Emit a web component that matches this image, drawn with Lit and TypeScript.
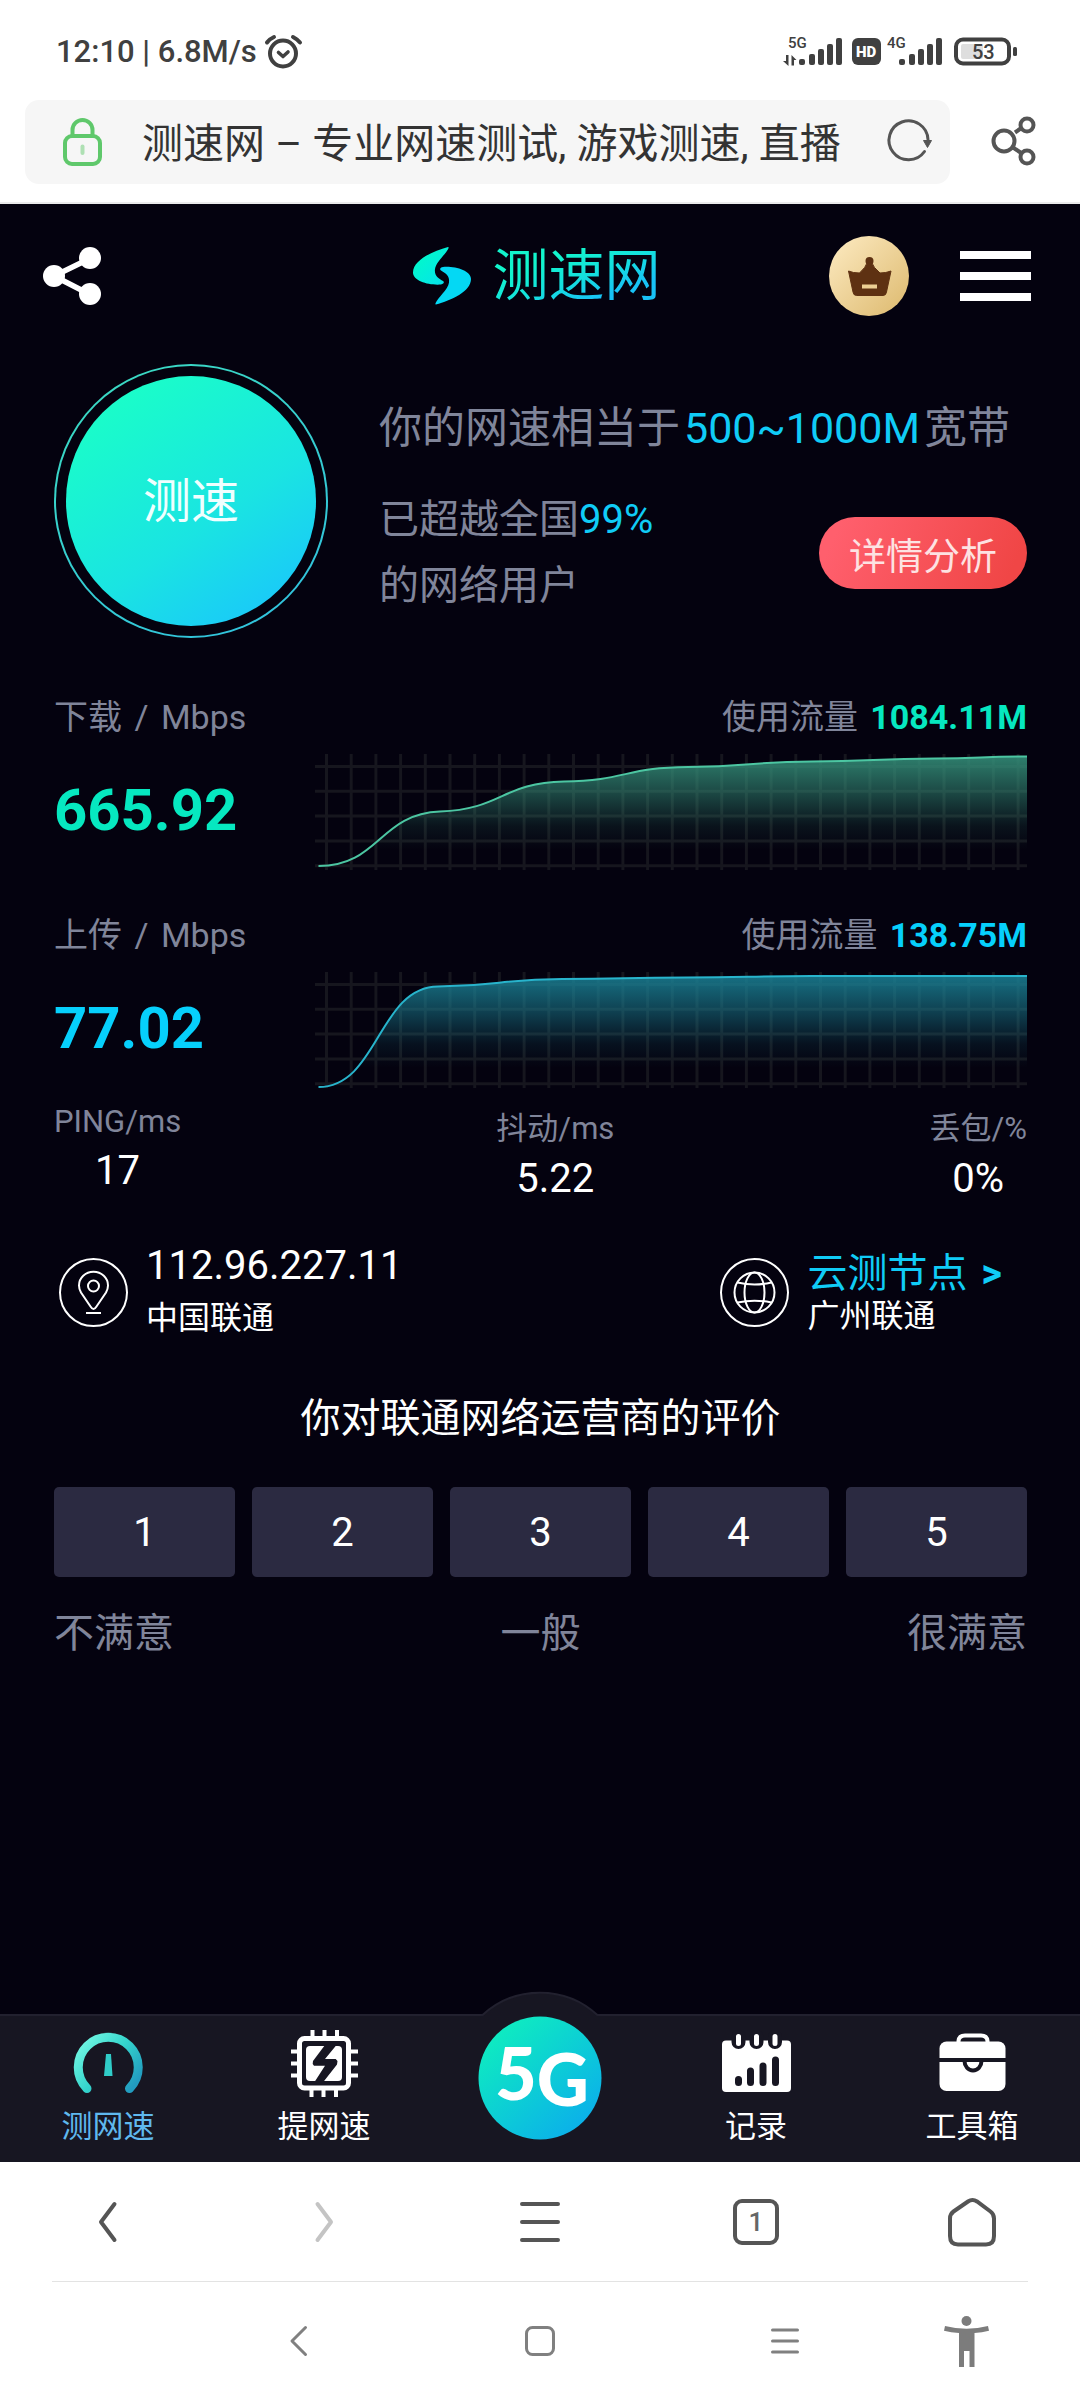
import { LitElement, html, css, svg } from "lit";
import { customElement, property, state } from "lit/decorators.js";

const fontStack = css`Roboto, "Noto Sans CJK SC", sans-serif`;

const resetButton = css`
  button {
    margin: 0;
    padding: 0;
    border: 0;
    background: none;
    font: inherit;
    color: inherit;
    cursor: pointer;
  }
  svg {
    display: block;
    flex: none;
    overflow: visible;
  }
`;

/* ---------- phone status bar ---------- */

@customElement("status-bar")
export class StatusBar extends LitElement {
  static styles = [
    resetButton,
    css`
      :host {
        display: flex;
        align-items: center;
        justify-content: space-between;
        padding: 28px 61px 24px 56px;
        line-height: 48px;
        font-size: 31px;
        font-weight: 500;
        color: #404040;
      }
      .left {
        display: flex;
        align-items: center;
        gap: 8px;
      }
      .net {
        font-size: 15px;
        font-weight: 500;
      }
      .hd {
        font-size: 15px;
        font-weight: 900;
      }
      .level {
        font-size: 20px;
        font-weight: 500;
      }
    `,
  ];

  private bars(x: number) {
    return [
      [0, 23, 6],
      [10, 18, 11],
      [19, 13, 16],
      [28, 8, 21],
      [37, 2, 27],
    ].map(
      ([dx, y, h]) => svg`<rect x=${x + dx} y=${y} width="6" height=${h} rx="2" fill="#404040"/>`,
    );
  }

  render() {
    return html`
      <div class="left">
        <span>12:10 | 6.8M/s</span>
        <svg width="37" height="34" viewBox="0 0 37 34" fill="none" stroke="#404040" stroke-linecap="round" aria-hidden="true">
          <circle cx="18" cy="18.5" r="13" stroke-width="4" />
          <path d="M13.5 17.5l4.5 4 5-4.5" stroke-width="3.6" stroke-linejoin="round" />
          <path d="M2 7.5Q4.5 4 9 2M35 7.5Q32 4 28 2" stroke-width="4" />
        </svg>
      </div>
      <svg width="236" height="32" viewBox="0 0 236 32" fill="#404040" role="img" aria-label="信号与电量">
        <text class="net" x="5" y="12">5G</text>
        <path d="M0 25h3v-6h2.5v11zM8.5 19l5 5h-2.5v-1.5v7h-2.5z" />
        ${this.bars(16)}
        <rect x="69" y="2" width="29" height="27" rx="6" />
        <text class="hd" x="73" y="21" fill="#fff">HD</text>
        <text class="net" x="104" y="12">4G</text>
        ${this.bars(116)}
        <rect x="178" y="8" width="22" height="15" rx="2" fill="#dedede" />
        <rect x="173" y="3.5" width="53" height="24" rx="7" fill="none" stroke="#404040" stroke-width="4" />
        <rect x="230" y="11" width="4" height="9" rx="1.5" />
        <text class="level" x="189" y="23">53</text>
      </svg>
    `;
  }
}

/* ---------- browser address bar ---------- */

@customElement("address-bar")
export class AddressBar extends LitElement {
  static styles = [
    resetButton,
    css`
      :host {
        display: flex;
        align-items: center;
        gap: 42px;
        padding: 0 44px 18px 25px;
        border-bottom: 2px solid #ebebeb;
      }
      .field {
        display: flex;
        align-items: center;
        flex: 1;
        min-width: 0;
        height: 84px;
        padding: 0 17px 0 38px;
        border-radius: 14px;
        background: #f6f6f6;
      }
      .title {
        flex: 1;
        min-width: 0;
        margin: 0 12px 0 39px;
        padding: 4px 0 0;
        border: 0;
        outline: 0;
        background: none;
        font: 400 41px/60px ${fontStack};
        color: #333;
      }
    `,
  ];

  render() {
    return html`
      <div class="field">
        <svg width="40" height="48" viewBox="0 0 40 48" fill="none" stroke="#5fc86b" stroke-width="4" aria-hidden="true">
          <rect x="2" y="18" width="35" height="28" rx="7" />
          <path d="M9.5 18v-6a10 10 0 0 1 20 0v6" />
          <path d="M19.5 28.5v6.5" stroke="#aee0b3" stroke-linecap="round" />
        </svg>
        <input class="title" type="text" aria-label="网址" .value=${"测速网 – 专业网速测试, 游戏测速, 直播"} />
        <button aria-label="刷新">
          <svg width="46" height="44" viewBox="0 0 46 44" fill="none" stroke="#555" stroke-width="3">
            <path d="M37.5 31.5A19.5 19.5 0 1 1 41 19.5" stroke-linecap="round" />
            <path d="M36.5 20.5h8l-4 7z" fill="#555" stroke-width="1" />
          </svg>
        </button>
      </div>
      <button aria-label="分享">
        <svg width="44" height="50" viewBox="0 0 44 50" fill="none" stroke="#555" stroke-width="4">
          <circle cx="12" cy="24" r="10.5" />
          <circle cx="35" cy="8" r="6.5" />
          <circle cx="35" cy="40" r="6.5" />
          <path d="M23 15.5l7-5M21 30.5l9 6" />
        </svg>
      </button>
    `;
  }
}

/* ---------- site header ---------- */

@customElement("site-header")
export class SiteHeader extends LitElement {
  static styles = [
    resetButton,
    css`
      :host {
        display: grid;
        grid-template-columns: 1fr auto 1fr;
        align-items: center;
        padding: 32px 49px 48px 42px;
      }
      .brand {
        display: flex;
        align-items: center;
        gap: 22px;
        text-decoration: none;
      }
      .word {
        font-size: 56px;
        line-height: 80px;
        font-weight: 400;
        color: transparent;
        background: linear-gradient(160deg, #12f5cc 30%, #14e2dc 50%, #18c2f6 72%);
        background-clip: text;
        -webkit-background-clip: text;
      }
      .tools {
        display: flex;
        align-items: center;
        justify-content: flex-end;
        gap: 51px;
      }
    `,
  ];

  render() {
    const half =
      "M35 0C20 4 0 13 0 25.5C0 34 16 38.5 28 37.5C31 37 31.5 35 30 34C26 31.5 21 29 22 22C23 15 33 7 35.5 1.2Q36 0 35 0Z";
    return html`
      <button aria-label="分享">
        <svg width="60" height="60" viewBox="0 0 60 60" fill="#fff" stroke="#fff">
          <path d="M49 12L12 30L49 49" fill="none" stroke-width="5.5" />
          <circle cx="12" cy="30" r="11" stroke="none" />
          <circle cx="48" cy="12" r="11" stroke="none" />
          <circle cx="48" cy="48" r="11" stroke="none" />
        </svg>
      </button>
      <a class="brand" href="#">
        <svg width="58" height="58" viewBox="0 0 58 58" aria-hidden="true">
          <defs>
            <linearGradient id="mark" gradientUnits="userSpaceOnUse" x1="8" y1="8" x2="48" y2="50">
              <stop offset="0" stop-color="#02f8cc" />
              <stop offset="0.5" stop-color="#04e8e4" />
              <stop offset="1" stop-color="#04c8fc" />
            </linearGradient>
          </defs>
          <path fill="url(#mark)" d=${half} />
          <g transform="rotate(180 29 28.7)">
            <path fill="#04d8f4" d=${half} />
          </g>
        </svg>
        <span class="word">测速网</span>
      </a>
      <div class="tools">
        <button aria-label="会员">
          <svg width="80" height="80" viewBox="0 0 80 80">
            <defs>
              <linearGradient id="gold" x1="0" y1="0" x2="1" y2="1">
                <stop offset="0.1" stop-color="#fae6ba" />
                <stop offset="0.9" stop-color="#e0be76" />
              </linearGradient>
            </defs>
            <circle cx="40" cy="40" r="40" fill="url(#gold)" />
            <circle cx="40.5" cy="25" r="4" fill="#5e3112" />
            <path
              fill="#5e3112"
              stroke="#5e3112"
              stroke-linejoin="round"
              d="M38 27h5Q44 31 51 37Q57 37 62 35L57.5 56Q57 59.500 54 59.5H27.5Q24.5 59.500 24 56L19.5 35Q24 37 30.5 37Q37 31 38 27z"
            />
            <rect x="33" y="48.5" width="15" height="4" fill="#eccf93" />
          </svg>
        </button>
        <button aria-label="菜单">
          <svg width="71" height="52" viewBox="0 0 71 52" fill="#fff">
            <path d="M0 1h71v8H0zM0 22h71v8H0zM0 43h71v8H0z" />
          </svg>
        </button>
      </div>
    `;
  }
}

/* ---------- speed panel: label, value and curve ---------- */

@customElement("speed-panel")
export class SpeedPanel extends LitElement {
  @property() label = "";
  @property() value = "";
  @property() traffic = "";
  @property() accent = "";
  @property() stroke = "";
  @property() fill = "";
  @property({ attribute: false }) points: number[][] = [];

  static styles = css`
    :host {
      display: flex;
      flex-direction: column;
      gap: 12px;
    }
    .head {
      display: flex;
      justify-content: space-between;
      font-size: 34px;
      line-height: 50px;
      color: #80859a;
    }
    .slash {
      margin: 0 4px;
    }
    .head b {
      margin-left: 4px;
    }
    .body {
      display: grid;
      grid-template-columns: 261px 1fr;
      align-items: center;
    }
    .value {
      padding-bottom: 4px;
      font-size: 58px;
      line-height: 68px;
      font-weight: 700;
    }
    .chart {
      display: block;
      width: 100%;
      height: 116px;
    }
    .green {
      color: #06e8c0;
    }
    .blue {
      color: #06d0fc;
    }
  `;

  private curve() {
    const p = this.points;
    let d = `M${p[0][0]} ${p[0][1]}`;
    for (let i = 1; i < p.length; i++) {
      const [x0, y0] = p[i - 1];
      const [x1, y1] = p[i];
      const slope = (k: number) => {
        if (k <= 0 || k >= p.length - 1) return 0;
        const a = (p[k][1] - p[k - 1][1]) / (p[k][0] - p[k - 1][0]);
        const b = (p[k + 1][1] - p[k][1]) / (p[k + 1][0] - p[k][0]);
        return a * b > 0 ? Math.max(a, b) * 0.15 : 0;
      };
      const h = (x1 - x0) / 2;
      d += `C${x0 + h} ${y0 + slope(i - 1) * h} ${x1 - h} ${y1 - slope(i) * h} ${x1} ${y1}`;
    }
    return d;
  }

  render() {
    const line = this.curve();
    const cols = Array.from({ length: 29 }, (_, i) => 11.5 + i * 24.7);
    const rows = Array.from({ length: 5 }, (_, i) => 12.5 + i * 24.8);
    return html`
      <div class="head">
        <span>${this.label} <span class="slash">/</span> Mbps</span>
        <span>使用流量 <b class=${this.accent}>${this.traffic}</b></span>
      </div>
      <div class="body">
        <span class="value ${this.accent}">${this.value}</span>
        <svg class="chart" viewBox="0 0 712 116" preserveAspectRatio="none" role="img" aria-label="${this.label}速度曲线">
          <defs>
            <linearGradient id="area" gradientUnits="userSpaceOnUse" x1="0" y1="0" x2="0" y2="96">
              <stop offset="0" stop-color=${this.fill} stop-opacity="0.9" />
              <stop offset="0.4" stop-color=${this.fill} stop-opacity="0.5" />
              <stop offset="0.75" stop-color=${this.fill} stop-opacity="0.12" />
              <stop offset="1" stop-color=${this.fill} stop-opacity="0" />
            </linearGradient>
          </defs>
          <g stroke="#16161e" stroke-width="3">
            ${cols.map((x) => svg`<path d="M${x} 0V116"/>`)}
            ${rows.map((y) => svg`<path d="M0 ${y}H712"/>`)}
          </g>
          <path d="${line}V116H3z" fill="url(#area)" />
          <path d=${line} fill="none" stroke=${this.stroke} stroke-width="2" />
        </svg>
      </div>
    `;
  }
}

/* ---------- bottom navigation of the site ---------- */

@customElement("site-tabs")
export class SiteTabs extends LitElement {
  static styles = [
    resetButton,
    css`
      :host {
        position: relative;
        display: grid;
        grid-template-columns: repeat(5, 1fr);
        justify-items: center;
        border-top: 2px solid #22212f;
        background: #171622;
        color: #fff;
      }
      .bump {
        position: absolute;
        left: 50%;
        top: -24px;
        margin-left: -60px;
      }
      .tab {
        display: flex;
        flex-direction: column;
        align-items: center;
        gap: 9px;
        padding: 12px 0 15px;
        font-size: 31px;
        line-height: 40px;
        color: inherit;
        text-decoration: none;
      }
      .active {
        color: #5fb8ee;
      }
      .five {
        position: relative;
        align-self: start;
      }
      .mark {
        font: 900 72px Lato, sans-serif;
      }
    `,
  ];

  render() {
    return html`
      <svg class="bump" width="120" height="26" viewBox="0 0 120 26" aria-hidden="true">
        <path d="M0 26L2 24A85 85 0 0 1 118 24L120 26z" fill="#171622" />
        <path d="M2 23.5A85 85 0 0 1 118 23.5" fill="none" stroke="#22212f" stroke-width="2" />
      </svg>
      <a class="tab active" href="#">
        <svg width="70" height="70" viewBox="0 0 70 70" aria-hidden="true">
          <defs>
            <linearGradient id="gauge" gradientUnits="userSpaceOnUse" x1="10" y1="12" x2="62" y2="56">
              <stop offset="0" stop-color="#70f6e2" />
              <stop offset="0.5" stop-color="#34d4cc" />
              <stop offset="1" stop-color="#229cc0" />
            </linearGradient>
          </defs>
          <path d="M14 60.5A30 30 0 1 1 56.5 60.5" fill="none" stroke="url(#gauge)" stroke-width="9" stroke-linecap="round" />
          <path d="M33 26h5l1.5 22h-8.5z" fill="#30ccc8" />
        </svg>
        测网速
      </a>
      <a class="tab" href="#">
        <svg width="70" height="70" viewBox="0 0 70 70" aria-hidden="true">
          <rect x="10.5" y="10.5" width="49" height="49.5" rx="5" fill="none" stroke="#fff" stroke-width="5" />
          <path
            d="M23.5 2v8M35.5 2v8M48 2v8M22.5 61v8M34.5 61v8M47 61v8M2 23.5h8M2 35.5h8M2 47.5h8M60 23.5h9M60 35.5h9M60 47.5h9"
            stroke="#fff"
            stroke-width="4"
          />
          <rect x="17" y="18" width="36" height="35" rx="4" fill="#fff" />
          <path fill="#171622" d="M36 17L47.5 17L36 31L46.7 31L48.5 33L48 36.5L34.3 54L25.5 54L36 37.7L25 37.7L23.7 36L24 33z" />
        </svg>
        提网速
      </a>
      <button class="five" aria-label="5G">
        <svg width="124" height="124" viewBox="0 0 124 124">
          <defs>
            <linearGradient id="disc" x1="0.15" y1="0.1" x2="0.85" y2="0.9">
              <stop offset="0" stop-color="#0eecc0" />
              <stop offset="1" stop-color="#0bb0ea" />
            </linearGradient>
          </defs>
          <circle cx="62" cy="62" r="61.5" fill="url(#disc)" />
          <text class="mark" x="17" y="84" fill="#fff">5<tspan dy="6">G</tspan></text>
        </svg>
      </button>
      <a class="tab" href="#">
        <svg width="70" height="70" viewBox="0 0 70 70" aria-hidden="true">
          <rect x="1" y="12.5" width="69" height="51.5" rx="4" fill="#fff" />
          <g stroke="#171622" stroke-width="14" stroke-linecap="round">
            <path d="M17.5 9v5M35.5 9v5M54 9v5" />
          </g>
          <g stroke="#fff" stroke-width="5" stroke-linecap="round">
            <path d="M17.5 8.5v7M35.5 8.5v7M54 8.5v7" />
          </g>
          <g stroke="#171622" stroke-width="7" stroke-linecap="round">
            <path d="M17.5 51.5v3M29.5 43v11.5M42 38v16.5M54.5 32v22.5" />
          </g>
        </svg>
        记录
      </a>
      <a class="tab" href="#">
        <svg width="70" height="70" viewBox="0 0 70 70" aria-hidden="true">
          <rect x="2.5" y="13.5" width="66" height="49.5" rx="7" fill="#fff" />
          <path d="M21.5 15v-2Q22 7.5 28 7.5H44Q50 7.5 50.5 13v2" fill="none" stroke="#fff" stroke-width="4" />
          <path d="M2 32H69" stroke="#171622" stroke-width="4" />
          <path d="M27.5 33a8.5 9.5 0 0 0 17 0" fill="none" stroke="#171622" stroke-width="4" />
        </svg>
        工具箱
      </a>
    `;
  }
}

/* ---------- browser and system bars ---------- */

@customElement("browser-bars")
export class BrowserBars extends LitElement {
  static styles = [
    resetButton,
    css`
      :host {
        display: block;
        background: #fff;
      }
      .tools,
      .system {
        display: grid;
        align-items: center;
        justify-items: center;
      }
      .tools {
        grid-template-columns: repeat(5, 1fr);
        height: 119px;
      }
      .system {
        grid-template-columns: 178fr 242fr 240fr 250fr 114fr 56fr;
        height: 118px;
      }
      .system :first-child {
        grid-column-start: 2;
      }
      .rule {
        height: 1px;
        margin: 0 52px;
        border: 0;
        background: #e3e3e3;
      }
      .count {
        font: 500 26px Roboto, sans-serif;
      }
    `,
  ];

  render() {
    return html`
      <div class="tools">
        <button aria-label="后退">
          <svg width="18" height="40" viewBox="0 0 18 40" fill="none" stroke="#555" stroke-width="4" stroke-linecap="round" stroke-linejoin="round">
            <path d="M15.5 2L2 20L15.5 38" />
          </svg>
        </button>
        <button aria-label="前进">
          <svg width="18" height="40" viewBox="0 0 18 40" fill="none" stroke="#c4c4c4" stroke-width="4" stroke-linecap="round" stroke-linejoin="round">
            <path d="M2.5 2L16 20L2.5 38" />
          </svg>
        </button>
        <button aria-label="菜单">
          <svg width="40" height="40" viewBox="0 0 40 40" stroke="#555" stroke-width="4" stroke-linecap="round">
            <path d="M2 2H38M2 20H38M2 38H38" />
          </svg>
        </button>
        <button aria-label="标签页">
          <svg width="46" height="46" viewBox="0 0 46 46">
            <rect x="2" y="2" width="42" height="42" rx="7" fill="none" stroke="#555" stroke-width="4" />
            <text class="count" x="23" y="32" text-anchor="middle" fill="#666">1</text>
          </svg>
        </button>
        <button aria-label="主页">
          <svg width="48" height="50" viewBox="0 0 48 50" fill="none" stroke="#555" stroke-width="4">
            <path d="M2 21.5Q2 17 5.5 14.5L20 4.5Q24.5 1.5 29 4.5L42.5 14.5Q46 17 46 21.5V39Q46 47.5 38 47.5H10Q2 47.5 2 39z" />
          </svg>
        </button>
      </div>
      <hr class="rule" />
      <div class="system">
        <button aria-label="返回">
          <svg width="18" height="30" viewBox="0 0 18 30" fill="none" stroke="#808080" stroke-width="3" stroke-linecap="round" stroke-linejoin="round">
            <path d="M15.5 1.5L2 15L15.5 28.5" />
          </svg>
        </button>
        <button aria-label="桌面">
          <svg width="30" height="30" viewBox="0 0 30 30" fill="none" stroke="#808080" stroke-width="3">
            <rect x="1.5" y="1.5" width="27" height="27" rx="6" />
          </svg>
        </button>
        <button aria-label="最近任务">
          <svg width="28" height="26" viewBox="0 0 28 26" stroke="#808080" stroke-width="3" stroke-linecap="round">
            <path d="M1.5 2H26.5M1.5 13H26.5M1.5 24H26.5" />
          </svg>
        </button>
        <button aria-label="无障碍">
          <svg width="46" height="51" viewBox="0 0 46 51" fill="#7c7c7c">
            <circle cx="22.5" cy="5" r="5" />
            <path d="M1 10Q22.5 15.5 44 10L45 14.8Q38 16.5 30.5 17V51H25.5V35H20V51H15V17Q7 16.5 0 14.8z" />
          </svg>
        </button>
      </div>
    `;
  }
}

/* ---------- page ---------- */

@customElement("app-root")
export class AppRoot extends LitElement {
  @state() private rating = 0;

  static styles = [
    resetButton,
    css`
      :host {
        display: flex;
        flex-direction: column;
        min-height: 100vh;
        background: #fff;
        font-family: ${fontStack};
      }
      .page {
        flex: 1;
        display: flex;
        flex-direction: column;
        background: #04020f;
        color: #fff;
      }
      .content {
        flex: 1;
        padding: 0 53px 0 54px;
      }
      .hero {
        display: grid;
        grid-template-columns: 274px 1fr;
        align-items: center;
        gap: 51px;
        margin-bottom: 54px;
      }
      .start {
        display: block;
        width: 274px;
        height: 274px;
        border-radius: 50%;
        background: linear-gradient(150deg, #3cdcc0, #30c0e0);
      }
      .gap {
        display: block;
        margin: 2px;
        padding: 10px;
        border-radius: 50%;
        background: #04020f;
      }
      .start .disc {
        box-sizing: border-box;
        display: flex;
        align-items: center;
        justify-content: center;
        height: 250px;
        padding-bottom: 8px;
        border-radius: 50%;
        background: linear-gradient(145deg, #1afcca 15%, #1ae4e2 58%, #1acaf8 88%);
        font-size: 48px;
        color: #f0ffff;
      }
      .summary {
        display: flex;
        flex-direction: column;
        gap: 26px;
        padding-top: 12px;
        color: #80859a;
        line-height: 66px;
      }
      .summary p {
        margin: 0;
      }
      .plan {
        font-size: 43px;
        white-space: nowrap;
      }
      .plan .hot {
        margin: 0 4px;
      }
      .hot {
        color: #10ccf6;
      }
      .rank {
        display: flex;
        align-items: center;
        justify-content: space-between;
        font-size: 40px;
      }
      .detail {
        height: 72px;
        padding: 8px 30px 0;
        border-radius: 36px;
        background: linear-gradient(115deg, #ff5f6d 10%, #f04646 90%);
        font-size: 37px;
        color: #fde2e2;
      }
      .speeds {
        display: flex;
        flex-direction: column;
        gap: 40px;
      }
      .stats {
        display: flex;
        justify-content: space-between;
        align-items: flex-start;
        margin: 15px 0 0;
        text-align: center;
      }
      .stats dt {
        font-size: 31px;
        color: #80859a;
      }
      .stats dd {
        margin: 7px 0 0;
        font-size: 40px;
      }
      .nodes {
        display: flex;
        justify-content: space-between;
        align-items: center;
        margin-top: 38px;
        padding: 0 25px 0 5px;
      }
      .node {
        display: flex;
        align-items: center;
        gap: 18px;
        font-size: 32px;
      }
      .node .main {
        display: block;
        font-size: 40px;
        text-decoration: none;
      }
      .node .main b {
        margin-left: 4px;
      }
      .node .sub {
        display: block;
      }
      .local {
        line-height: 52px;
      }
      .remote {
        line-height: 43px;
      }
      .remote .place {
        padding-top: 6px;
      }
      .ask {
        margin: 45px 0 38px;
        font-size: 40px;
        line-height: 60px;
        font-weight: 400;
        text-align: center;
      }
      .scores {
        display: grid;
        grid-template-columns: repeat(5, 1fr);
        gap: 17px;
      }
      .score {
        height: 90px;
        border-radius: 5px;
        background: #2b2a41;
        font-size: 40px;
      }
      .chosen {
        background: #14a4c4;
      }
      .scale {
        display: grid;
        grid-template-columns: 1fr 1fr 1fr;
        margin-top: 27px;
        font-size: 40px;
        line-height: 60px;
        color: #80859a;
      }
      .mid {
        text-align: center;
      }
      .end {
        text-align: right;
      }
    `,
  ];

  render() {
    return html`
      <status-bar></status-bar>
      <address-bar></address-bar>
      <div class="page">
        <site-header></site-header>
        <main class="content">
          <section class="hero">
            <button class="start">
              <span class="gap"><span class="disc">测速</span></span>
            </button>
            <div class="summary">
              <p class="plan">你的网速相当于<span class="hot">500~1000M</span>宽带</p>
              <div class="rank">
                <p>已超越全国<span class="hot">99%</span><br />的网络用户</p>
                <button class="detail">详情分析</button>
              </div>
            </div>
          </section>

          <section class="speeds">
            <speed-panel
              label="下载"
              value="665.92"
              traffic="1084.11M"
              accent="green"
              stroke="#4cc6a2"
              fill="#34907a"
              .points=${[[3.5, 112], [125, 57.5], [249, 27.5], [373, 13], [497, 7.5], [620, 4.5], [712, 2.5]]}
            ></speed-panel>
            <speed-panel
              label="上传"
              value="77.02"
              traffic="138.75M"
              accent="blue"
              stroke="#28b4cc"
              fill="#1a8296"
              .points=${[[3.5, 115], [123, 14.5], [247, 7], [371, 5.5], [497, 4], [712, 4]]}
            ></speed-panel>
          </section>

          <dl class="stats">
            <div><dt>PING/ms</dt><dd>17</dd></div>
            <div><dt>抖动/ms</dt><dd>5.22</dd></div>
            <div><dt>丢包/%</dt><dd>0%</dd></div>
          </dl>

          <section class="nodes">
            <div class="node local">
              <svg width="69" height="69" viewBox="0 0 69 69" fill="none" stroke="#fff" stroke-width="2" aria-hidden="true">
                <circle cx="34.5" cy="34.5" r="33.5" />
                <path
                  d="M34.5 51Q33 51 31.5 48.5L22 34.5Q20 31 20 27.5A14.5 13.7 0 0 1 49 27.5Q49 31 47 34.5L37.5 48.5Q36 51 34.5 51z"
                />
                <circle cx="34.5" cy="28" r="5.5" />
                <path d="M27 55h15" />
              </svg>
              <div class="place">
                <span class="main">112.96.227.11</span>
                <span class="sub">中国联通</span>
              </div>
            </div>
            <div class="node remote">
              <svg width="69" height="69" viewBox="0 0 69 69" fill="none" stroke="#fff" stroke-width="2" aria-hidden="true">
                <circle cx="34.5" cy="34.5" r="33.5" />
                <circle cx="34.5" cy="34.5" r="20" />
                <ellipse cx="34.5" cy="34.5" rx="10" ry="20" />
                <path d="M17.5 24.5Q34.5 28.5 51.5 24.5M17.5 44.5Q34.5 41 51.5 44.5" />
              </svg>
              <div class="place">
                <a class="main hot" href="#">云测节点 <b>&gt;</b></a>
                <span class="sub">广州联通</span>
              </div>
            </div>
          </section>

          <h2 class="ask">你对联通网络运营商的评价</h2>
          <div class="scores">
            ${[1, 2, 3, 4, 5].map(
              (n) => html`<button
                class="score ${this.rating === n ? "chosen" : ""}"
                @click=${() => (this.rating = n)}
              >${n}</button>`,
            )}
          </div>
          <div class="scale">
            <span>不满意</span><span class="mid">一般</span><span class="end">很满意</span>
          </div>
        </main>
        <site-tabs></site-tabs>
      </div>
      <browser-bars></browser-bars>
    `;
  }
}
